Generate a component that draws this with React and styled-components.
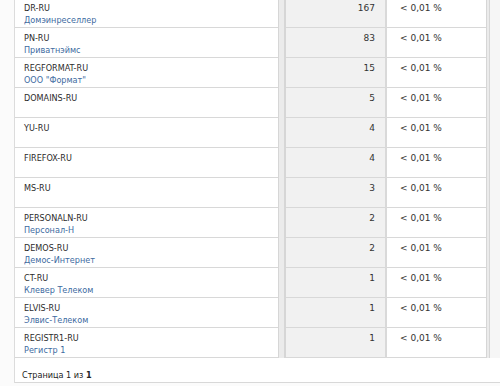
import React from "react";
import styled, { createGlobalStyle } from "styled-components";

const GlobalStyle = createGlobalStyle`
  html, body {
    margin: 0;
    padding: 0;
    background: #fbfbfb;
    overflow: hidden;
  }
  body {
    font-family: "DejaVu Sans Condensed", "DejaVu Sans", sans-serif;
    font-size: 9px;
    color: #333;
  }
`;

const Page = styled.div`
  width: 500px;
  height: 386px;
  padding-left: 14px;
  box-sizing: border-box;
`;

const Table = styled.div`
  margin-top: -2px;
  border-left: 1px solid #dcdcdc;
  background: #fff;
`;

const Row = styled.div`
  display: grid;
  grid-template-columns: 263px 8px 99px 2px 99px 4px 1fr;
  height: 30px;
`;

const Cell = styled.div`
  border-bottom: 1px solid #d8d8d8;
  box-sizing: border-box;
  padding: ${(p) => p.$pad || "4px 9px 0"};
  line-height: 12px;
  text-align: ${(p) => (p.$right ? "right" : "left")};
  background: ${(p) => p.$bg || "#fff"};
  white-space: nowrap;
  font-family: ${(p) =>
    p.$wide
      ? `"DejaVu Sans", sans-serif`
      : `"DejaVu Sans Condensed", "DejaVu Sans", sans-serif`};
`;

const Stripe = styled.div`
  background: #ebebeb;
  border-left: 1px solid #d6d6d6;
  border-right: ${(p) => (p.$wide ? "2px" : "1px")} solid #d6d6d6;
`;

const Divider = styled.div`
  background: #d9d9d9;
`;

const Rest = styled.div`
  background: #f6f6f6;
`;

const Name = styled.div`
  color: #2b2b2b;
`;

const Owner = styled.div`
  color: #3e6b9f;
`;

const Footer = styled.div`
  height: 25px;
  box-sizing: border-box;
  padding: 11px 0 0 7px;
  line-height: 12px;
  border-bottom: 1px solid #d8d8d8;
  background: #fff;
  color: #222;

  b {
    font-weight: bold;
  }
`;

const rows = [
  ["DR-RU", "Домэинреселлер", 167],
  ["PN-RU", "Приватнэймс", 83],
  ["REGFORMAT-RU", "ООО \"Формат\"", 15],
  ["DOMAINS-RU", "", 5],
  ["YU-RU", "", 4],
  ["FIREFOX-RU", "", 4],
  ["MS-RU", "", 3],
  ["PERSONALN-RU", "Персонал-Н", 2],
  ["DEMOS-RU", "Демос-Интернет", 2],
  ["CT-RU", "Клевер Телеком", 1],
  ["ELVIS-RU", "Элвис-Телеком", 1],
  ["REGISTR1-RU", "Регистр 1", 1],
];

export default function App() {
  return (
    <Page>
      <GlobalStyle />
      <Table>
        {rows.map(([name, owner, count]) => (
          <Row key={name}>
            <Cell>
              <Name>{name}</Name>
              {owner && <Owner>{owner}</Owner>}
            </Cell>
            <Stripe $wide />
            <Cell $right $wide $bg="#f1f1f1" $pad="4px 10px 0">
              {count}
            </Cell>
            <Divider />
            <Cell $wide $pad="4px 0 0 13px">&lt; 0,01 %</Cell>
            <Stripe />
            <Rest />
          </Row>
        ))}
        <Footer>
          Страница 1 из <b>1</b>
        </Footer>
      </Table>
    </Page>
  );
}
